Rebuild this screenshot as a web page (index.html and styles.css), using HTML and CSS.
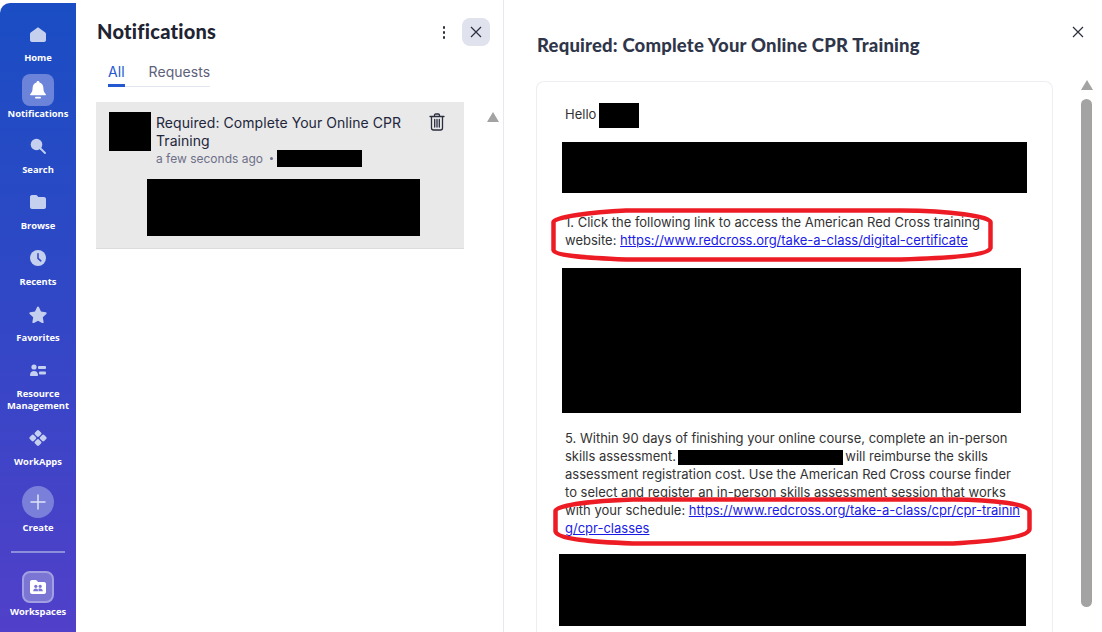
FILE: index.html
```html
<!DOCTYPE html>
<html lang="en">
<head>
    <meta charset="UTF-8">
    <meta name="viewport" content="width=device-width, initial-scale=1.0">
    <title>Notifications</title>
    <link rel="stylesheet" href="styles.css">
</head>
<body>
    <div class="app">
        <!-- left nav -->
        <nav class="sidebar">
            <div class="nav-item">
                <div class="nav-icon">
                    <svg width="16" height="15" viewBox="0 0 16 15"><path d="M8 .3 15.300 5.600c.5.4.7.9.7 1.500V13c0 1.100-.9 2-2 2H2c-1.100 0-2-.9-2-2V7.100c0-.6.2-1.100.7-1.500z"/></svg>
                </div>
                <span>Home</span>
            </div>
            <div class="nav-item">
                <div class="nav-icon active">
                    <svg class="white" width="18" height="20" viewBox="0 0 18 20"><path d="M9 1c-.9 0-1.500.6-1.500 1.400C5 3.100 3.600 5.200 3.600 8c0 3.500-1 4.800-2.300 6-.5.5-.2 1.300.5 1.300h14.400c.7 0 1-.8.5-1.300-1.300-1.200-2.300-2.500-2.300-6 0-2.800-1.400-4.900-3.900-5.600C10.500 1.600 9.900 1 9 1z"/><rect x="6" y="16.700" width="6" height="1.800" rx=".9"/></svg>
                </div>
                <span>Notifications</span>
            </div>
            <div class="nav-item">
                <div class="nav-icon">
                    <svg width="16" height="16" viewBox="0 0 16 16"><circle cx="6.500" cy="6.500" r="5.800"/><path d="M10.500 10.500 15 15" fill="none" stroke="#c5d0ee" stroke-width="1.800" stroke-linecap="round"/></svg>
                </div>
                <span>Search</span>
            </div>
            <div class="nav-item">
                <div class="nav-icon">
                    <svg width="16" height="14" viewBox="0 0 16 14"><path d="M2 0h3.800c.5 0 1 .2 1.300.6L8.300 2H14c1.100 0 2 .9 2 2v8c0 1.100-.9 2-2 2H2c-1.100 0-2-.9-2-2V2C0 .9.900 0 2 0z"/></svg>
                </div>
                <span>Browse</span>
            </div>
            <div class="nav-item">
                <div class="nav-icon">
                    <svg width="16" height="16" viewBox="0 0 16 16"><circle cx="8" cy="8" r="8"/><path d="M8 3.800V8.300L10.800 10.800" fill="none" stroke="#3a48c8" stroke-width="1.600" stroke-linecap="round"/></svg>
                </div>
                <span>Recents</span>
            </div>
            <div class="nav-item">
                <div class="nav-icon">
                    <svg width="18" height="17" viewBox="0 0 18 17"><path d="M9 .5c.4 0 .7.2.9.6l2.100 4.400 4.800.7c.8.100 1.100 1.100.5 1.700l-3.500 3.400.8 4.800c.1.800-.7 1.400-1.400 1L9 14.800l-4.200 2.300c-.7.400-1.500-.2-1.400-1l.8-4.800L.7 7.900C.1 7.300.4 6.300 1.200 6.200L6 5.500 8.100 1.100C8.300.7 8.600.5 9 .5z"/></svg>
                </div>
                <span>Favorites</span>
            </div>
            <div class="nav-item">
                <div class="nav-icon">
                    <svg width="16" height="12" viewBox="0 0 16 12"><circle cx="4" cy="3" r="2.600"/><path d="M0 11c0-2.500 1.700-4 4-4s4 1.500 4 4c0 .6-.4 1-1 1H1c-.6 0-1-.4-1-1z"/><rect x="8" y="2" width="8" height="3" rx="1"/><rect x="9" y="7.500" width="7" height="3" rx="1"/></svg>
                </div>
                <span>Resource<br>Management</span>
            </div>
            <div class="nav-item">
                <div class="nav-icon">
                    <svg width="18" height="16" viewBox="0 0 18 16"><rect x="6.200" y=".7" width="5.600" height="5.600" rx="1.400" transform="rotate(45 9 3.500)"/><rect x="1" y="5.200" width="5.600" height="5.600" rx="1.400" transform="rotate(45 3.800 8)"/><rect x="11.400" y="5.200" width="5.600" height="5.600" rx="1.400" transform="rotate(45 14.200 8)"/><rect x="6.200" y="9.700" width="5.600" height="5.600" rx="1.400" transform="rotate(45 9 12.500)"/></svg>
                </div>
                <span>WorkApps</span>
            </div>
            <div class="nav-item create">
                <div class="nav-icon round">
                    <svg width="16" height="16" viewBox="0 0 16 16"><path d="M8 1v14M1 8h14" fill="none" stroke="#dfe3f7" stroke-width="1.500" stroke-linecap="round"/></svg>
                </div>
                <span>Create</span>
            </div>
            <div class="nav-divider"></div>
            <div class="nav-item workspaces">
                <div class="nav-icon outlined">
                    <svg class="white" width="16" height="14" viewBox="0 0 16 14"><path d="M2 0h3.500c.5 0 1 .2 1.300.6L8 2h6c1.100 0 2 .9 2 2v8c0 1.100-.9 2-2 2H2c-1.100 0-2-.9-2-2V2C0 .9.900 0 2 0z"/><circle cx="5.800" cy="6.300" r="1.600" fill="#7b76d4"/><circle cx="10.200" cy="6.300" r="1.600" fill="#7b76d4"/><path d="M3.200 11.200c0-1.600 1.100-2.600 2.600-2.600s2.400 1 2.400 2.600zM8.600 11.200c0-1 0-1.800-.4-2.100.5-.4 1.200-.5 2-.5 1.500 0 2.600 1 2.600 2.600z" fill="#7b76d4"/></svg>
                </div>
                <span>Workspaces</span>
            </div>
        </nav>

        <!-- notification list -->
        <section class="list-panel">
            <div class="list-head">
                <h2>Notifications</h2>
                <div class="kebab"><i></i><i></i><i></i></div>
                <div class="close-btn">
                    <svg width="12" height="12" viewBox="0 0 12 12"><path d="M1 1l10 10M11 1 1 11"/></svg>
                </div>
            </div>
            <div class="tabs">
                <div class="tab selected">All</div>
                <div class="tab">Requests</div>
            </div>
            <div class="list-body">
                <div class="notif">
                    <div class="notif-top">
                        <div class="redact avatar"></div>
                        <div class="notif-text">
                            <div class="notif-title">Required: Complete Your Online CPR Training</div>
                            <div class="notif-meta">a few seconds ago <b></b> <span class="redact meta-name"></span></div>
                        </div>
                        <svg class="trash" width="16" height="18" viewBox="0 0 16 18"><path d="M1 3.500h14M5.500 3.300V2.200c0-.7.500-1.200 1.200-1.200h2.600c.7 0 1.200.5 1.200 1.200v1.100M2.500 3.500V15c0 1.100.9 2 2 2h7c1.100 0 2-.9 2-2V3.500M5.700 6.500v7.500M8 6.500v7.500M10.300 6.500v7.500"/></svg>
                    </div>
                    <div class="redact notif-preview"></div>
                </div>
                <div class="arrow-up list-arrow"></div>
            </div>
        </section>

        <!-- notification detail -->
        <section class="detail">
            <div class="detail-head">
                <h1>Required: Complete Your Online CPR Training</h1>
                <svg class="detail-close" width="12" height="12" viewBox="0 0 12 12"><path d="M1 1l10 10M11 1 1 11"/></svg>
            </div>
            <div class="detail-body">
                <div class="card">
                    <div class="hello">Hello <span class="redact hello-name"></span></div>
                    <div class="redact block-a"></div>
                    <p class="step first">1. Click the following link to access the American Red Cross training website: <a href="#">https://www.redcross.org/take-a-class/digital-certificate</a>
                        <svg class="mark mark-a" width="442" height="54" viewBox="0 0 442 54"><path d="M2.500 14C3 9 40 4 75 2.500H350C400 3 438 8 439.500 14V40C438 47 400 50 350 51.500H75C40 50 3 48 2.500 42Z"/></svg>
                    </p>
                    <div class="redact block-b"></div>
                    <p class="step second">5. Within 90 days of finishing your online course, complete an in-person skills assessment. <span class="redact inline-name"></span> will reimburse the skills assessment registration cost. Use the American Red Cross course finder to select and register an in-person skills assessment session that works with your schedule: <a href="#">https://www.redcross.org/take-a-class/cpr/cpr-training/cpr-classes</a>
                        <svg class="mark mark-b" width="479" height="49" viewBox="0 0 479 49"><path d="M2.500 14C3 8 40 4 80 2.500H400C440 3 476 7 476.500 14V32C476 40 440 44 400 46.500H80C40 45 3 42 2.500 34Z"/></svg>
                    </p>
                    <div class="redact block-c"></div>
                </div>
                <div class="scroll">
                    <div class="arrow-up"></div>
                    <div class="thumb"></div>
                </div>
            </div>
        </section>
    </div>
</body>
</html>
```

FILE: styles.css
```css
html, body {
    margin: 0;
    padding: 0;
    height: 100%;
    overflow: hidden;
    background: #fff;
}
body {
    font-family: Inter, "Liberation Sans", sans-serif;
    color: #2a2e3d;
}
h1, h2, p {
    margin: 0;
}
.app {
    display: flex;
    height: 632px;
    overflow: hidden;
}
.redact {
    background: #000;
}

/* sidebar */
.sidebar {
    width: 76px;
    flex: none;
    margin-top: 3px;
    padding-top: 15px;
    box-sizing: border-box;
    border-top-left-radius: 10px;
    background: linear-gradient(180deg, #1a4dc3 0%, #3247c6 50%, #5140c9 100%);
    display: flex;
    flex-direction: column;
    align-items: center;
    overflow: hidden;
}
.nav-item {
    display: flex;
    flex-direction: column;
    align-items: center;
    margin-bottom: 10px;
    color: #fff;
    font-family: "Open Sans", sans-serif;
    font-size: 9.4px;
    font-weight: 700;
    line-height: 12px;
    text-align: center;
    white-space: nowrap;
}
.nav-item span {
    margin-top: 2px;
}
.nav-icon {
    width: 32px;
    height: 32px;
    border-radius: 8px;
    display: flex;
    align-items: center;
    justify-content: center;
}
.nav-icon svg {
    fill: #c5d0ee;
}
.nav-icon svg.white {
    fill: #fff;
}
.nav-icon.active {
    background: #6b83d8;
}
.nav-icon.round {
    border-radius: 50%;
    background: #7a80d9;
}
.nav-icon.outlined {
    box-sizing: border-box;
    background: #7b76d4;
    border: 2px solid #a29fe3;
}
.create {
    margin-top: 8px;
    margin-bottom: 0;
}
.create span {
    margin-top: 4px;
}
.nav-divider {
    width: 54px;
    height: 2px;
    margin: 17px 0 18px;
    background: #8b8edd;
}
.workspaces {
    margin: 0;
}
.workspaces span {
    margin-top: 3px;
}

/* list panel */
.list-panel {
    width: 428px;
    flex: none;
    box-sizing: border-box;
    border-right: 1px solid #e8e9ee;
    padding-left: 20px;
}
.list-head {
    display: flex;
    align-items: center;
    height: 28px;
    margin-top: 18px;
    padding-right: 13px;
}
.list-head h2 {
    flex: 1;
    margin-left: 1px;
    margin-top: -2px;
    font-family: Lato, sans-serif;
    font-size: 20px;
    font-weight: 900;
    letter-spacing: .25px;
    color: #1f2433;
}
.kebab {
    display: flex;
    flex-direction: column;
    gap: 2px;
    margin-right: 17px;
}
.kebab i {
    width: 2px;
    height: 3px;
    background: #2a2e3d;
    border-radius: 1px;
}
.close-btn {
    width: 28px;
    height: 28px;
    border-radius: 8px;
    background: #e0e2ee;
    display: flex;
    align-items: center;
    justify-content: center;
}
.close-btn svg, .detail-close {
    fill: none;
    stroke: #2a2e3d;
    stroke-width: 1.200;
}
.tabs {
    display: inline-flex;
    gap: 24px;
    margin-top: 16px;
    margin-left: 12px;
    border-bottom: 1px solid #e3e5f0;
    height: 24px;
}
.tab {
    font-size: 14px;
    line-height: 19px;
    letter-spacing: .05px;
    color: #5d6079;
}
.tab.selected {
    color: #2457d0;
    border-bottom: 3px solid #2457d0;
    box-sizing: border-box;
    height: 25px;
}
.list-body {
    display: flex;
    margin-top: 15px;
}
.notif {
    width: 368px;
    height: 147px;
    box-sizing: border-box;
    background: #e9e9ea;
    border-bottom: 1px solid #dcdcde;
    padding: 10px 13px;
}
.notif-top {
    display: flex;
    align-items: flex-start;
}
.avatar {
    width: 42px;
    height: 39px;
    flex: none;
}
.notif-text {
    width: 266px;
    margin-left: 5px;
    margin-top: 2px;
}
.notif-title {
    font-size: 14px;
    line-height: 18px;
    letter-spacing: .06px;
    color: #22263a;
}
.notif-meta {
    display: flex;
    align-items: center;
    height: 18px;
    margin-top: -1px;
    font-size: 12px;
    color: #6e7087;
}
.notif-meta b {
    width: 3px;
    height: 3px;
    margin: 0 4px 0 7px;
    border-radius: 50%;
    background: #6e7087;
}
.meta-name {
    width: 85px;
    height: 17px;
}
.trash {
    margin: 1px 0 0 7px;
    fill: none;
    stroke: #2a2e3d;
    stroke-width: 1.300;
    stroke-linecap: round;
}
.notif-preview {
    width: 273px;
    height: 57px;
    margin: 12px 0 0 38px;
}
.arrow-up {
    width: 0;
    height: 0;
    border-left: 6px solid transparent;
    border-right: 6px solid transparent;
    border-bottom: 10px solid #a3a3a3;
}
.list-arrow {
    margin: 10px 0 0 23px;
}

/* detail */
.detail {
    flex: 1;
    min-width: 0;
}
.detail-head {
    position: relative;
    height: 81px;
    box-sizing: border-box;
    padding: 34px 0 0 33px;
}
.detail-head h1 {
    font-family: Lato, sans-serif;
    font-size: 18.5px;
    font-weight: 900;
    letter-spacing: .18px;
    line-height: 22px;
    color: #30364a;
}
.detail-close {
    position: absolute;
    top: 26px;
    right: 18px;
}
.detail-body {
    display: flex;
    padding-left: 32px;
}
.card {
    width: 517px;
    height: 551px;
    flex: none;
    box-sizing: border-box;
    border: 1px solid #eceef2;
    border-bottom: 0;
    border-radius: 8px 8px 0 0;
    padding: 21px 0 0 25px;
    font-size: 13px;
    line-height: 18px;
    color: #333;
}
.hello {
    display: flex;
    align-items: flex-start;
    gap: 3px;
    height: 25px;
    padding-left: 3px;
    line-height: 22px;
}
.hello-name {
    width: 40px;
    height: 25px;
}
.block-a {
    width: 465px;
    height: 51px;
    margin-top: 14px;
}
.block-b {
    width: 459px;
    height: 145px;
    margin-top: 19px;
}
.block-c {
    width: 467px;
    height: 72px;
    margin: 17px 0 0 -3px;
}
.step {
    position: relative;
    width: 458px;
    margin-left: 3px;
}
.step.first {
    margin-top: 20px;
}
.step.second {
    margin-top: 16px;
}
.step a {
    color: #1a1ae6;
    word-break: break-all;
}
.inline-name {
    display: inline-block;
    width: 165px;
    height: 15px;
    margin: 0 -1px 0 -2px;
    vertical-align: middle;
}
.mark {
    position: absolute;
    fill: none;
    stroke: #ed1c24;
    stroke-width: 4.500;
}
.mark-a {
    left: -14px;
    top: -5px;
}
.mark-b {
    left: -12px;
    top: 68px;
}
.scroll {
    margin: -1px 0 0 28px;
    width: 11px;
}
.scroll .arrow-up {
    margin-bottom: 9px;
    margin-left: -0.5px;
}
.thumb {
    width: 11px;
    height: 508px;
    border-radius: 6px;
    background: #a3a3a3;
}
```
